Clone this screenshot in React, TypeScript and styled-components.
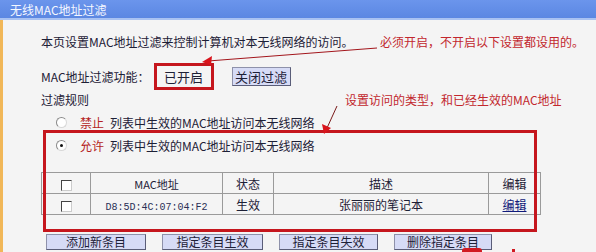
import styled, { createGlobalStyle } from 'styled-components';

const GlobalStyle = createGlobalStyle`
  html, body {
    margin: 0;
    padding: 0;
    background: #f4f4f4;
  }
  body {
    font-family: "Noto Sans CJK SC", "DejaVu Sans", sans-serif;
    font-size: 12px;
    color: #1d2036;
  }
`;

const Page = styled.div`
  position: relative;
  width: 596px;
  height: 252px;
  overflow: hidden;
  background: #f4f4f4;
`;

const TitleBar = styled.div`
  height: 18px;
  padding-left: 10px;
  display: flex;
  align-items: center;
  color: #f4f7ff;
  font-size: 12px;
  background: linear-gradient(#6b95ec, #5b87e2);
  border-bottom: 2px solid #a9c2f2;
`;

const Body = styled.div`
  height: 232px;
  border-left: 3px solid #f1b758;
  padding: 14px 0 0 38px;
  box-sizing: border-box;
`;

const LineRow = styled.div<{ $first: number; $top: number }>`
  display: grid;
  grid-template-columns: ${p => p.$first}px 1fr;
  align-items: center;
  height: 16px;
  line-height: 16px;
  margin-top: ${p => p.$top}px;
  white-space: nowrap;
`;

const Note = styled.span`
  color: #c2272d;
`;

const FilterRow = styled.div`
  display: flex;
  align-items: center;
  height: 27px;
  margin-top: 13px;
`;

const StatusBox = styled.span`
  width: 60px;
  height: 27px;
  box-sizing: border-box;
  border: 3px solid #c5161d;
  display: flex;
  align-items: center;
  justify-content: center;
  margin-left: 4px;
  font-size: 13px;
`;

const Button = styled.button<{ $w: number; $h?: number }>`
  width: ${p => p.$w}px;
  height: ${p => p.$h ?? 19}px;
  padding: 0;
  display: flex;
  align-items: center;
  justify-content: center;
  font-family: inherit;
  font-size: ${p => (p.$h ? 12 : 13)}px;
  line-height: 1;
  color: #1d2036;
  background: #d6dbf6;
  border: 1px solid #5a5d78;
  border-top-color: #8e91aa;
  border-left-color: #8e91aa;
`;

const RadioRow = styled.div<{ $top: number }>`
  display: flex;
  align-items: center;
  height: 16px;
  margin-top: ${p => p.$top}px;
  padding-left: 15px;
  white-space: nowrap;
`;

const Radio = styled.span<{ $checked?: boolean }>`
  position: relative;
  width: 11px;
  height: 11px;
  border-radius: 50%;
  box-sizing: border-box;
  border: 1px solid #8a8a8a;
  border-right-color: #d8d8d8;
  border-bottom-color: #d8d8d8;
  background: #fff;
  margin-right: 13px;

  &::after {
    content: '';
    display: ${p => (p.$checked ? 'block' : 'none')};
    position: absolute;
    left: 3px;
    top: 3px;
    width: 3px;
    height: 3px;
    border-radius: 50%;
    background: #111;
  }
`;

const RuleWord = styled.span`
  color: #b51e22;
  margin-right: 6px;
`;

const Table = styled.table`
  margin-top: 19px;
  width: 499px;
  border-collapse: collapse;
  table-layout: fixed;

  td {
    height: 20px;
    padding: 0;
    border: 1px solid #9a9a9a;
    text-align: center;
    font-size: 12px;
  }
`;

const Mono = styled.span`
  font-family: "Liberation Mono", monospace;
  font-size: 10px;
  color: #2a2f55;
`;

const MacHead = styled.span`
  font-size: 11px;
`;

const Check = styled.span`
  display: inline-block;
  width: 11px;
  height: 11px;
  box-sizing: border-box;
  border: 1px solid #444;
  border-right-color: #ccc;
  border-bottom-color: #ccc;
  background: #fff;
  vertical-align: middle;
`;

const EditLink = styled.a`
  color: #101a7a;
  text-decoration: underline;
`;

const ButtonRow = styled.div`
  display: flex;
  gap: 16px;
  margin-top: 19px;
  margin-left: 5px;
`;

const BigFrame = styled.div`
  position: absolute;
  left: 43px;
  top: 130px;
  width: 494px;
  height: 102px;
  box-sizing: border-box;
  border: 3px solid #c5161d;
  pointer-events: none;
`;

const Overlay = styled.svg`
  position: absolute;
  left: 0;
  top: 0;
  pointer-events: none;
`;

export default function App() {
  return (
    <Page>
      <GlobalStyle />
      <TitleBar>无线MAC地址过滤</TitleBar>
      <Body>
        <LineRow $first={339} $top={0}>
          <span>本页设置MAC地址过滤来控制计算机对本无线网络的访问。</span>
          <Note>必须开启，不开启以下设置都设用的。</Note>
        </LineRow>

        <FilterRow>
          <span>MAC地址过滤功能：</span>
          <StatusBox>已开启</StatusBox>
          <Button $w={59} style={{ marginLeft: 18 }}>关闭过滤</Button>
        </FilterRow>

        <LineRow $first={304} $top={2}>
          <span>过滤规则</span>
          <Note>设置访问的类型，和已经生效的MAC地址</Note>
        </LineRow>

        <RadioRow $top={6}>
          <Radio />
          <RuleWord>禁止</RuleWord>
          列表中生效的MAC地址访问本无线网络
        </RadioRow>
        <RadioRow $top={7}>
          <Radio $checked />
          <RuleWord>允许</RuleWord>
          列表中生效的MAC地址访问本无线网络
        </RadioRow>

        <Table>
          <colgroup>
            <col style={{ width: 49 }} />
            <col style={{ width: 132 }} />
            <col style={{ width: 51 }} />
            <col style={{ width: 215 }} />
            <col style={{ width: 52 }} />
          </colgroup>
          <tbody>
            <tr>
              <td><Check /></td>
              <td><MacHead>MAC地址</MacHead></td>
              <td>状态</td>
              <td>描述</td>
              <td>编辑</td>
            </tr>
            <tr>
              <td><Check /></td>
              <td><Mono>D8:5D:4C:07:04:F2</Mono></td>
              <td>生效</td>
              <td>张丽丽的笔记本</td>
              <td><EditLink>编辑</EditLink></td>
            </tr>
          </tbody>
        </Table>

        <ButtonRow>
          <Button $w={100} $h={16}>添加新条目</Button>
          <Button $w={101} $h={16}>指定条目生效</Button>
          <Button $w={99} $h={16}>指定条目失效</Button>
          <Button $w={98} $h={16}>删除指定条目</Button>
        </ButtonRow>
      </Body>

      <BigFrame />

      <Overlay width="596" height="252" viewBox="0 0 596 252">
        <line x1="377" y1="48" x2="208" y2="61" stroke="#a3161c" strokeWidth="1" />
        <polygon points="202,62 212,56 211,65" fill="#d9141c" />
        <line x1="337" y1="106" x2="327" y2="128" stroke="#7a1a1a" strokeWidth="1" />
        <polygon points="324,134 322,124 331,128" fill="#d9141c" />
        <rect x="462" y="248" width="20" height="8" rx="3" fill="#d11a22" />
        <rect x="512" y="249" width="3" height="4" fill="#d11a22" />
      </Overlay>
    </Page>
  );
}
